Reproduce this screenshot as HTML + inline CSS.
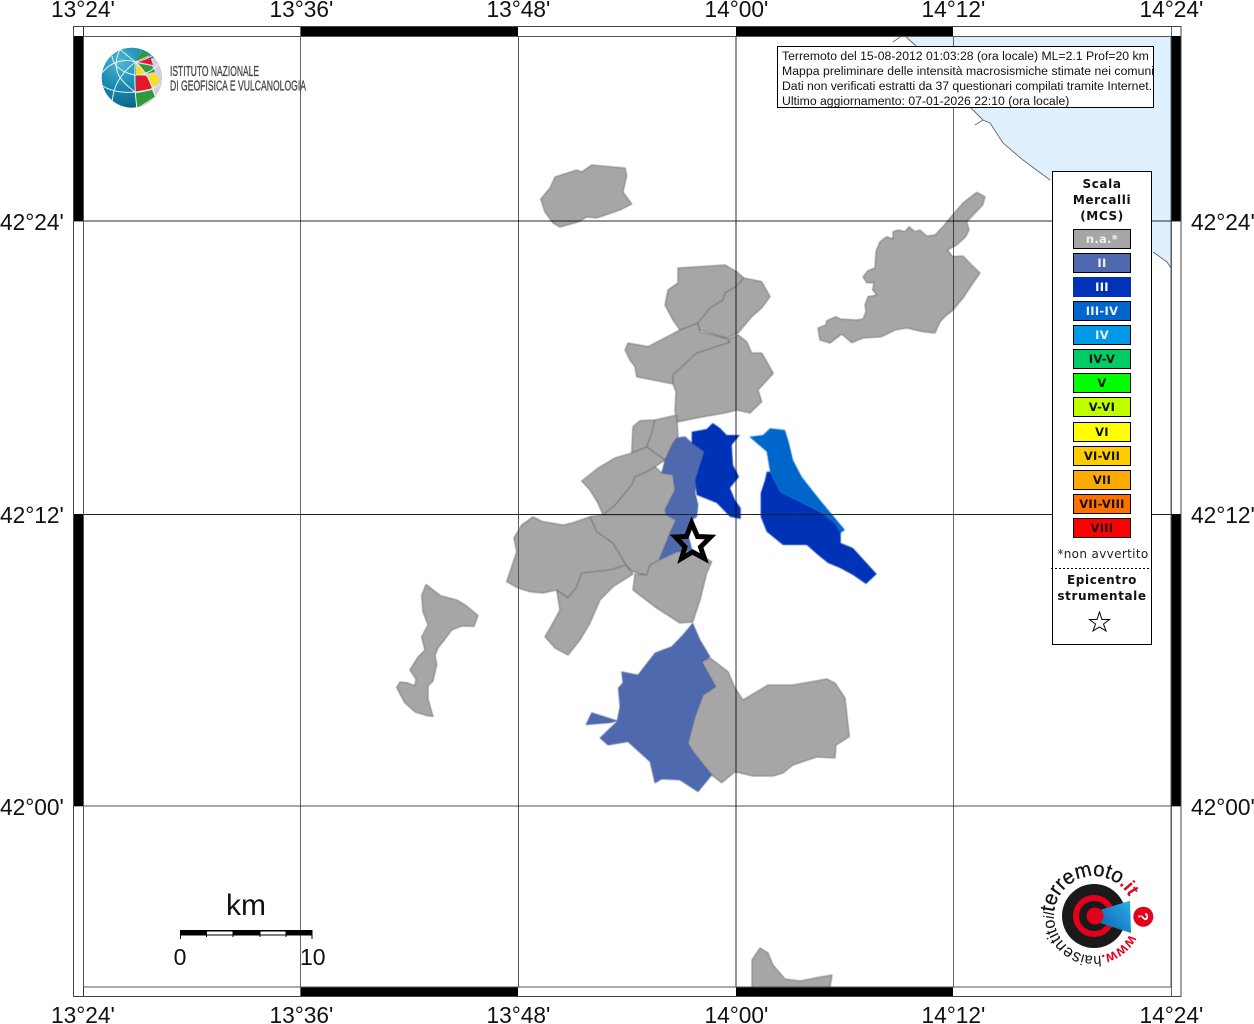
<!DOCTYPE html>
<html><head><meta charset="utf-8"><style>
html,body{margin:0;padding:0;background:#fff;width:1254px;height:1024px;overflow:hidden}
svg{display:block}
.ax{font-family:"Liberation Sans",sans-serif;font-size:22.7px;fill:#111}
.ib{font-family:"Liberation Sans",sans-serif;font-size:12.23px;fill:#111}
.lt{font-family:"DejaVu Sans",sans-serif;font-weight:bold;font-size:12px;letter-spacing:.6px;text-anchor:middle;fill:#111}
.sw{font-family:"DejaVu Sans",sans-serif;font-weight:bold;font-size:11.5px;letter-spacing:.3px;text-anchor:middle}
.g{fill:#a6a6a6;stroke:#666;stroke-width:.8;stroke-linejoin:round}
</style></head><body>
<svg width="1254" height="1024" viewBox="0 0 1254 1024" xmlns="http://www.w3.org/2000/svg">
<defs>
<filter id="soft" x="0" y="0" width="1254" height="1024" filterUnits="userSpaceOnUse"><feGaussianBlur stdDeviation=".55"/></filter>
<radialGradient id="glb" cx=".32" cy=".25" r=".85"><stop offset="0" stop-color="#4fb6d3"/><stop offset=".5" stop-color="#1686ad"/><stop offset="1" stop-color="#0a5a7e"/></radialGradient>
<clipPath id="gc"><circle cx="131.7" cy="77.7" r="30"/></clipPath>
<linearGradient id="cone" x1="0" y1="1" x2="1" y2="0"><stop offset="0" stop-color="#0b5fb0"/><stop offset="1" stop-color="#2bb0ea"/></linearGradient>
</defs>
<rect width="1254" height="1024" fill="#fff"/>
<!-- sea -->
<path d="M905 36L915 45L940 75L973 110L983 120L990 123L1003 143L1023 160L1050 180L1100 220L1153 252L1167 262L1171 268V36Z" fill="#dff1fe"/>
<path d="M905 36L915 45L940 75L973 110L983 120L990 123L1003 143L1023 160L1050 180M1153 252L1167 262L1171 268M975 125L983 120M893 42L900 37" fill="none" stroke="#666" stroke-width=".9"/>

<g filter="url(#soft)">
<!-- grey polygons -->
<path class="g" d="M591.7 165L613 167L625 168L626.7 175.5L623 192L631.7 204L620 210L596.7 218L586.7 217L578 222L560 227L553 223L545 212L540.7 199L550 188L555 177L576.7 170L581.7 172Z"/>
<path class="g" d="M976.7 192.3L985 196.7L982.7 205L966.7 221.7L969 230L965.7 236.7L956.7 245L947.3 250L952.7 256.7L963 256L971.7 265L980 273L973 283L963 298L953 310L946.7 315L940 321.7L935 333L923 331.7L906.7 328L895 330L881.7 336.7L863 338L851.7 342.7L841.7 334L830 343L820 340L818 328L826 325L826.7 320.7L836 316.7L840 319L856.7 320L863 319L866 311.7L865 305L868 296.7L877 295L872.7 290L874 282.7L866.7 282.7L863 276.7L868 270.7L875 268L876 251.7L880 241.7L886.7 236.7L893 239L893 231.7L898 230L905 231.7L909 226.7L915 231.7L920 230L926.7 236L935 235L943 226.7L950 218L963 203Z"/>
<path class="g" d="M426 584.5L440 595.5L456.7 600L466.7 606L478 615.5L474 626.4L461.7 626L451.7 630L445 639L438 648L435 655.5L436.7 664.5L433 681L428 686L428 699L433 716.5L426.7 715.5L415 712L405 703L396.7 687.5L400 682L406.7 682.7L415 685.6L416 679L410 670L418 657L425 650L421.7 637L428 624.5L423 612L421.7 595.5Z"/>
<!-- north group -->
<path class="g" d="M678 268L725 265L736.7 271.7L744 278L736 286.7L725 293L723 300L710 308L697.7 323.3L680 330L673 320L665 305L668 290L678 283Z"/>
<path class="g" d="M744 278L761.7 281.7L770 296.7L761.7 308L751.7 316.7L738 333L726.7 338L700 330L697.7 323.3L710 308L723 300L725 293L736 286.7Z"/>
<path class="g" d="M625 350L628 343L648 346.7L680 330L697.7 323.3L700 331.7L728 339L730 342.3L696.7 353L673 375L673 384L653 380L636.7 376.7L635 366.7L630 360Z"/>
<path class="g" d="M738 335L746.7 341.7L751.7 353L761.7 353L773.3 373.3L758 390L761.7 401.7L750 413L736.7 410L725 413L703 416.7L678 421.7L675 411.7L676 391.7L673 384L673 375L696.7 353L730 342.3L728 339Z"/>
<!-- central group -->
<path class="g" d="M533 517L543 521.7L563 525L572 523L590 516.7L596.7 531.7L613 543L626 565L610 570L581.7 573L576.7 586.7L568 598L556.7 590L543 593L530 591.7L518 588L506.7 581.7L516.7 551.7L514 538L521.7 525Z"/>
<path class="g" d="M626 565L633 574L613 586.7L600 600L590 623L580 640L568 655L555 648L545 636.7L553 623L560 610L556.7 590L568 598L576.7 586.7L581.7 573L610 570Z"/>
<path class="g" d="M590 516.7L603 515L666.7 515L676 520L670 533L660 560L650 565L646.7 575L633 571.7L626 565L613 543L596.7 531.7Z"/>
<path class="g" d="M655 466.7L661.7 473L673 475L675 490L665 510L666.7 515L603 515L615 505L631.7 485L635 476.7L646.7 471.7Z"/>
<path class="g" d="M581.7 481L596.7 469L615 458L631.7 453L646.7 446.7L665 460L655 466.7L646.7 471.7L635 476.7L631.7 485L615 505L603 515L598 503L590 490Z"/>
<path class="g" d="M631.7 453L633 426.7L640 420.7L655 420L651.7 433L646.7 446.7Z"/>
<path class="g" d="M655 420L676.7 415L678 436.7L673 443L665 460L646.7 446.7L651.7 433Z"/>
<path class="g" d="M650 565L659 560L676.7 551.7L692 550L711.7 561.7L706.7 573L700 600L692.7 622L680 623L656.7 608L633 590L635 574L646.7 575Z"/>
<path class="g" d="M710 658L728 671.7L735 688L743 700L768 685L793 685L826.7 679L835 683L845 698L849.3 736.7L836 745L835 758L816.7 757L793 765L783 773L773 776L753 776L735 771.7L721.7 782.7L711.7 775L693 751.7L688 743L695 716.7L703 695L715.7 686.7L701.7 661.7Z"/>
<path class="g" d="M760 948L768 953L773 965L785 979L800 981L815 978L832 975L830 987L752 987L752 960Z"/>
<!-- II -->
<path d="M676.7 438L685 436.7L691.7 443L704 451.7L703 461.7L696.7 473L695 493L698 505L696.7 516.7L691.7 520L688 535L692 550L676.7 551.7L659 560L670 533L676 520L666.7 515L665 510L675 490L673 475L661.7 473L665 460L673 443Z" fill="#4f69ae" stroke="#445a95" stroke-width=".6"/>
<path d="M692.7 623.3L700 640L710 656.7L701.7 661.7L715.7 686.7L703 695L695 716.7L688 743L693 751.7L711.7 775L698 791.7L680 780L661.7 779L655 783L650 761.7L628 741.7L608 745L600 738L611.7 726.7L617 721.7L620 706.7L618.3 688L623 683L621.7 671.7L638 675L655 653L671.7 646.7L683 635Z" fill="#4f69ae" stroke="#445a95" stroke-width=".6"/>
<path d="M591.7 712.7L617 720.7L610.7 722.7L586 724.7Z" fill="#4f69ae" stroke="#445a95" stroke-width=".6"/>
<!-- III -->
<path d="M691.7 431.7L706.7 429L712.7 423L720 428L726.7 435L740 435L731.7 445L733 465L739 476.7L730 488L735 500L740.7 508L740.7 519L730 516.7L716.7 503L696.7 495L695 480L704 451.7L691.7 443Z" fill="#0033b8"/>
<path d="M766.7 471.7L770 471.7L780 491.7L800 501.7L820 511.7L835 523L840.7 533L840.7 543L853 548L876.7 574L866 584L853 575L840 568L828 563L818 555L806.7 545L783 545L766.7 531.7L760.7 516.7L760.7 493L765 480Z" fill="#0033b8"/>
<!-- III-IV -->
<path d="M749.3 436.7L763 435L770 428.3L785 430L789 443L793 460L801.7 476.7L820 500L836.7 520L845 530L840.7 533L835 523L820 511.7L800 501.7L780 491.7L770 471.7L766.7 451.7Z" fill="#0066cc"/>
</g>

<!-- grid -->
<g fill="none">
<path d="M83.5 26V997" stroke="#333"/>
<path d="M300.5 26V997" stroke="#666"/>
<path d="M518.5 36V987" stroke="#555"/>
<path d="M736 36V987" stroke="#000" stroke-opacity=".42" stroke-width="2"/>
<path d="M953.5 36V987" stroke="#000" stroke-opacity=".6"/>
<path d="M1171.5 26V997" stroke="#666"/>
<path d="M73 221H1181" stroke="#000" stroke-opacity=".42" stroke-width="2"/>
<path d="M73 514.5H1181" stroke="#222"/>
<path d="M73 806H1181" stroke="#000" stroke-opacity=".45" stroke-width="1.5"/>
</g>
<!-- frame ticks -->
<g fill="#000">
<rect x="301" y="26" width="217" height="10"/><rect x="736" y="26" width="217" height="10"/>
<rect x="301" y="987" width="217" height="10"/><rect x="736" y="987" width="217" height="10"/>
<rect x="73" y="36" width="10" height="185"/><rect x="73" y="514" width="10" height="292"/>
<rect x="1171" y="36" width="10" height="185"/><rect x="1171" y="514" width="10" height="292"/>
</g>
<rect x="73.5" y="26.5" width="1107.5" height="970" fill="none" stroke="#444"/>
<rect x="83.5" y="36.5" width="1087.5" height="950.5" fill="none" stroke="#555"/>

<!-- star -->
<path d="M691.700 523L697.500 536.500L710.500 537L700.500 547L704.500 558.500L692.500 552L681.500 558.500L685 547L675.500 537L686.500 536.500Z" fill="none" stroke="#000" stroke-width="5" stroke-linejoin="miter"/>

<!-- axis labels -->
<g class="ax">
<text x="51" y="17">13°24'</text><text x="269.500" y="17">13°36'</text><text x="486.500" y="17">13°48'</text><text x="704.500" y="17">14°00'</text><text x="921.500" y="17">14°12'</text><text x="1139.500" y="17">14°24'</text>
<text x="51" y="1023">13°24'</text><text x="269.500" y="1023">13°36'</text><text x="486.500" y="1023">13°48'</text><text x="704.500" y="1023">14°00'</text><text x="921.500" y="1023">14°12'</text><text x="1139.500" y="1023">14°24'</text>
<text x="0" y="230">42°24'</text><text x="0" y="523">42°12'</text><text x="0" y="815">42°00'</text>
<text x="1191" y="230">42°24'</text><text x="1191" y="523">42°12'</text><text x="1191" y="815">42°00'</text>
</g>

<!-- info box -->
<rect x="777.5" y="46.5" width="376" height="61" fill="#fff" stroke="#000"/>
<svg x="778" y="47" width="375" height="60" viewBox="778 47 375 60">
<g class="ib">
<text x="782" y="60">Terremoto del 15-08-2012 01:03:28 (ora locale) ML=2.1 Prof=20 km</text>
<text x="782" y="75" textLength="372">Mappa preliminare delle intensità macrosismiche stimate nei comuni</text>
<text x="782" y="90" textLength="370">Dati non verificati estratti da 37 questionari compilati tramite Internet.</text>
<text x="782" y="105">Ultimo aggiornamento: 07-01-2026 22:10 (ora locale)</text>
</g></svg>

<!-- legend -->
<rect x="1052.5" y="171.5" width="99" height="473" fill="#fff" stroke="#000"/>
<text class="lt" x="1102" y="188">Scala</text>
<text class="lt" x="1102" y="204">Mercalli</text>
<text class="lt" x="1102" y="220">(MCS)</text>
<g stroke="#000">
<rect x="1073.5" y="229.5" width="57" height="19" fill="#a6a6a6"/>
<rect x="1073.5" y="253.5" width="57" height="19" fill="#4f69ae"/>
<rect x="1073.5" y="277.5" width="57" height="19" fill="#0033b8" stroke="#0033b8"/>
<rect x="1073.5" y="301.5" width="57" height="19" fill="#0066cc"/>
<rect x="1073.5" y="325.5" width="57" height="19" fill="#0099e6"/>
<rect x="1073.5" y="349.5" width="57" height="19" fill="#00cc66"/>
<rect x="1073.5" y="373.5" width="57" height="19" fill="#00ff00"/>
<rect x="1073.5" y="397.5" width="57" height="19" fill="#bfff00"/>
<rect x="1073.5" y="422.5" width="57" height="19" fill="#ffff00"/>
<rect x="1073.5" y="446.5" width="57" height="19" fill="#ffcc00"/>
<rect x="1073.5" y="470.5" width="57" height="19" fill="#ffaa00"/>
<rect x="1073.5" y="494.5" width="57" height="19" fill="#ff7000"/>
<rect x="1073.5" y="518.5" width="57" height="19" fill="#ff0000"/>
</g>
<g class="sw">
<text x="1102" y="243" fill="#f0f0f0">n.a.*</text>
<text x="1102" y="267" fill="#f0f0f0">II</text>
<text x="1102" y="291" fill="#fff">III</text>
<text x="1102" y="315" fill="#f0f0f0">III-IV</text>
<text x="1102" y="339" fill="#f0f0f0">IV</text>
</g>
<g class="sw" fill="#111">
<text x="1102" y="363">IV-V</text>
<text x="1102" y="387">V</text>
<text x="1102" y="411">V-VI</text>
<text x="1102" y="436">VI</text>
<text x="1102" y="460">VI-VII</text>
<text x="1102" y="484">VII</text>
<text x="1102" y="508">VII-VIII</text>
<text x="1102" y="532">VIII</text>
</g>
<text x="1103" y="558" style="font-family:'DejaVu Sans',sans-serif;font-size:12px;letter-spacing:.35px;text-anchor:middle;fill:#222">*non avvertito</text>
<path d="M1051 568.5H1150" stroke="#000" stroke-dasharray="2 2"/>
<text class="lt" x="1102" y="584">Epicentro</text>
<text class="lt" x="1102" y="600">strumentale</text>
<path d="M1099.500 612L1102 619.500L1109.500 619.500L1103.500 624L1106 631L1099.500 627L1093 631L1095.500 624L1089.500 619.500L1097 619.500Z" fill="#fff" stroke="#000" stroke-width="1"/>

<!-- scale bar -->
<rect x="180" y="930" width="132.500" height="5.500" fill="#000"/>
<rect x="207" y="931.500" width="26" height="3" fill="#fff"/>
<rect x="260" y="931.500" width="26" height="3" fill="#fff"/>
<path d="M180.500 930V939M206.500 930V937M233 930V937M260 930V937M286 930V937M312 930V939" stroke="#000" fill="none"/>
<text x="246" y="915" style="font-family:'Liberation Sans',sans-serif;font-size:30px;text-anchor:middle;fill:#111">km</text>
<text x="180" y="965" style="font-family:'Liberation Sans',sans-serif;font-size:23px;text-anchor:middle;fill:#111">0</text>
<text x="300" y="965" style="font-family:'Liberation Sans',sans-serif;font-size:23px;fill:#111">10</text>

<!-- INGV logo -->
<g clip-path="url(#gc)">
<rect x="100" y="46" width="64" height="64" fill="url(#glb)"/>
<path d="M136 62L141 50.500L150 55L147 60L162 55V110H136Z" fill="#d4cfdd"/>
<path d="M136 61L141.500 50.500L150 55Z" fill="#2f9a3c"/>
<path d="M136.500 61.500L150 56.500L153 65Z" fill="#e2192c"/>
<path d="M138 63.500L152 66L155 72L146.500 73.500Z" fill="#2f9a3c"/>
<path d="M136 64L146 73.500L147 74L136 74.500Z" fill="#f4e020"/>
<path d="M147 75.500L155 73.500L160 80L153 88Z" fill="#f4e020"/>
<path d="M136 75L147 76L152 88.500L136 91.500Z" fill="#e2192c"/>
<path d="M135 93.500L152 90L155 96.500L137 108Z" fill="#2f9a3c"/>
<path d="M155 96.500L158 94L153 102Z" fill="#e2192c"/>
<g fill="none" stroke="#e8f4f6" stroke-width="1">
<path d="M135.500 62C125 70 113 82 112 104"/>
<path d="M135.500 62C124 58 110 62 102 73"/>
<path d="M135.500 62C130 58 122 51 118 48"/>
<path d="M135.500 62C134 75 135 95 137 108"/>
<path d="M135.500 62C145 70 153 85 155 96"/>
<path d="M135.500 62C146 60 152 56 155 54"/>
<path d="M120 50C116 56 115 66 118 74C122 82 130 88 135 92C143 92 152 90 160 84"/>
<path d="M103 86C112 92 125 93 135 92"/>
<path d="M135 75C123 73 113 66 112 56"/>
<path d="M135 75C143 75 152 72 158 64"/>
</g>
</g>
<text x="170" y="76" textLength="89" lengthAdjust="spacingAndGlyphs" style="font-family:'Liberation Sans',sans-serif;font-size:14.500px;fill:#444;stroke:#444;stroke-width:.3">ISTITUTO NAZIONALE</text>
<text x="170" y="90.500" textLength="136" lengthAdjust="spacingAndGlyphs" style="font-family:'Liberation Sans',sans-serif;font-size:14.500px;fill:#444;stroke:#444;stroke-width:.3">DI GEOFISICA E VULCANOLOGIA</text>

<!-- terremoto logo -->
<circle cx="1094" cy="916" r="32" fill="#1a1a1a"/>
<circle cx="1094" cy="916" r="18" fill="none" stroke="#e2001a" stroke-width="6"/>
<path d="M1100 910L1130 900.700L1131 933L1100 923Z" fill="url(#cone)"/>
<circle cx="1095" cy="916" r="8.500" fill="#e2001a"/>
<circle cx="1143.300" cy="916.700" r="10" fill="#e2001a"/>
<text transform="translate(1143.300 916.700) rotate(90)" x="0" y="5" style="font-family:'Liberation Sans',sans-serif;font-weight:bold;font-size:14px;text-anchor:middle;fill:#fff">?</text>
<path id="arc" d="M1129.600 934.200A40 40 0 1 1 1129.300 897.200" fill="none"/>
<text style="font-family:'Liberation Sans',sans-serif;font-size:17px;fill:#111"><textPath href="#arc" textLength="212" lengthAdjust="spacingAndGlyphs"><tspan fill="#e2001a" font-weight="bold" font-size="15">www.</tspan><tspan font-size="15">hai</tspan><tspan font-size="17">sentito</tspan><tspan font-style="italic" font-size="15">il</tspan><tspan font-size="21" stroke="#111" stroke-width=".3">terremoto</tspan><tspan fill="#e2001a" font-weight="bold" font-size="19">.it</tspan></textPath></text>
</svg>
</body></html>
